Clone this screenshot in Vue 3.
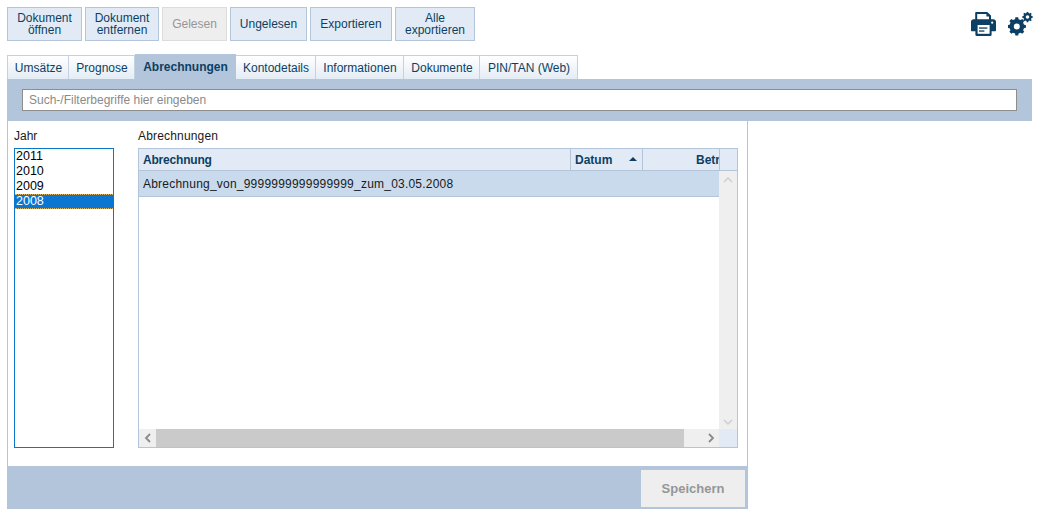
<script setup>
const actions = [
  { label: ['Dokument', 'öffnen'], w: 75 },
  { label: ['Dokument', 'entfernen'], w: 74 },
  { label: ['Gelesen'], w: 65, disabled: true },
  { label: ['Ungelesen'], w: 77 },
  { label: ['Exportieren'], w: 82 },
  { label: ['Alle', 'exportieren'], w: 80 },
]
const tabs = [
  { label: 'Umsätze', w: 62 },
  { label: 'Prognose', w: 66 },
  { label: 'Abrechnungen', w: 101, active: true },
  { label: 'Kontodetails', w: 80 },
  { label: 'Informationen', w: 88 },
  { label: 'Dokumente', w: 76 },
  { label: 'PIN/TAN (Web)', w: 98 },
]
const years = ['2011', '2010', '2009', '2008']

function gear(cx, cy, outer, root, hole, teeth) {
  const pt = (r, a) => `${(cx + r * Math.cos(a)).toFixed(2)} ${(cy + r * Math.sin(a)).toFixed(2)}`
  const step = (Math.PI * 2) / teeth
  let d = ''
  for (let i = 0; i < teeth; i++) {
    const a = i * step - Math.PI / 2
    const w = step * 0.2
    const b = step * 0.3
    d += `${i ? 'L' : 'M'}${pt(root, a - b)}L${pt(outer, a - w)}L${pt(outer, a + w)}L${pt(root, a + b)}`
  }
  d += `Z M${cx - hole} ${cy}a${hole} ${hole} 0 1 0 ${hole * 2} 0a${hole} ${hole} 0 1 0 ${-hole * 2} 0Z`
  return d
}
const bigGear = gear(8.8, 14.4, 9.2, 7.4, 3, 8)
const smallGear = gear(19.5, 5, 5.3, 4.1, 1.8, 8)
</script>

<template>
  <div class="page">
    <header class="toolbar">
      <div class="actions">
        <button
          v-for="a in actions"
          :key="a.label[0] + a.w"
          class="action"
          :class="{ disabled: a.disabled }"
          :style="{ width: a.w + 'px' }"
        >
          <span v-for="l in a.label" :key="l">{{ l }}</span>
        </button>
      </div>
      <div class="tools">
        <svg class="printer" viewBox="0 0 25 24" width="25" height="24">
          <path fill="#0c3f63" fill-rule="evenodd" d="M5 0h11.2L20 3.4V9H4.2V.8C4.2.4 4.6 0 5 0zM6.2 2v6h11.8V4.4h-2.6V2z" />
          <path fill="#0c3f63" d="M2.6 7.2h19.8c1.4 0 2.6 1.2 2.6 2.6v8.4c0 .6-.4 1-1 1h-3.4v3.6c0 .6-.4 1.2-1 1.2H5.4c-.6 0-1-.6-1-1.2v-3.6H1c-.6 0-1-.4-1-1V9.8c0-1.4 1.2-2.6 2.6-2.6z" />
          <rect x="6.6" y="13" width="12" height="8.8" fill="#fff" />
          <rect x="8" y="15.4" width="8.4" height="1.3" fill="#0c3f63" />
          <rect x="8" y="18.4" width="5.4" height="1.3" fill="#0c3f63" />
          <circle cx="21.2" cy="10.7" r="1.1" fill="#fff" />
        </svg>
        <svg class="cogs" viewBox="0 0 25 24" width="25" height="24">
          <path fill="#0c3f63" fill-rule="evenodd" :d="bigGear" />
          <path fill="#0c3f63" fill-rule="evenodd" :d="smallGear" />
        </svg>
      </div>
    </header>

    <nav class="tabs">
      <div
        v-for="t in tabs"
        :key="t.label"
        class="tab"
        :class="{ active: t.active }"
        :style="{ width: t.w + 'px' }"
      >{{ t.label }}</div>
    </nav>

    <div class="filter">
      <div class="filter-input">Such-/Filterbegriffe hier eingeben</div>
    </div>

    <main class="panel">
      <div class="content">
        <section class="year-col">
          <div class="label">Jahr</div>
          <div class="listbox">
            <div
              v-for="y in years"
              :key="y"
              class="year"
              :class="{ selected: y === '2008' }"
            >{{ y }}</div>
          </div>
        </section>
        <section class="table-col">
          <div class="label label-wide">Abrechnungen</div>
          <div class="grid">
            <div class="grid-head">
              <div class="th th-name">Abrechnung</div>
              <div class="th th-date">Datum<span class="sort"></span></div>
              <div class="th th-amount"><span>Betrag</span></div>
              <div class="th th-spare"></div>
            </div>
            <div class="grid-body">
              <div class="rows">
                <div class="row">Abrechnung_von_9999999999999999_zum_03.05.2008</div>
              </div>
              <div class="vscroll">
                <svg width="12" height="8" viewBox="0 0 12 8"><path d="M2 6l4-4 4 4" fill="none" stroke="#cfcfcf" stroke-width="1.5" /></svg>
                <svg width="12" height="8" viewBox="0 0 12 8"><path d="M2 2l4 4 4-4" fill="none" stroke="#cfcfcf" stroke-width="1.5" /></svg>
              </div>
            </div>
            <div class="hscroll-row">
              <div class="hscroll">
                <svg class="arrow" width="17" height="12" viewBox="0 0 17 12"><path d="M11 2L7 6l4 4" fill="none" stroke="#8a8a8a" stroke-width="1.8" /></svg>
                <div class="thumb"></div>
                <svg class="arrow end" width="17" height="12" viewBox="0 0 17 12"><path d="M7 2l4 4-4 4" fill="none" stroke="#8a8a8a" stroke-width="1.8" /></svg>
              </div>
              <div class="corner"></div>
            </div>
          </div>
        </section>
      </div>
      <footer class="footer">
        <button class="save">Speichern</button>
      </footer>
    </main>
  </div>
</template>

<style>
html, body { margin: 0; background: #fff; }
</style>

<style scoped>
.page {
  width: 1040px;
  height: 512px;
  box-sizing: border-box;
  padding: 7px 8px 0 7px;
  overflow: hidden;
  font-family: "Liberation Sans", Arial, sans-serif;
  font-size: 12px;
  color: #0c3f63;
}
.toolbar {
  display: flex;
  justify-content: space-between;
  height: 34px;
}
.actions { display: flex; gap: 3px; }
.action {
  box-sizing: border-box;
  height: 34px;
  padding: 0;
  border: 1px solid #b3c5da;
  background: #e2ebf5;
  color: #0c3f63;
  font: 12px/12px "Liberation Sans", Arial, sans-serif;
  display: flex;
  flex-direction: column;
  align-items: center;
  justify-content: center;
}
.action.disabled {
  background: #eeeeee;
  border-color: #dcdcdc;
  color: #969696;
}
.tools {
  display: flex;
  gap: 12px;
  padding: 5px 0 0;
  margin-right: -1px;
  align-items: flex-start;
}
.tabs {
  display: flex;
  align-items: flex-end;
  height: 25px;
  margin-top: 13px;
}
.tab {
  box-sizing: border-box;
  height: 24px;
  line-height: 24px;
  padding-left: 1px;
  text-align: center;
  border: 1px solid #c3d2e3;
  border-bottom: 0;
  border-left-width: 0;
  background: linear-gradient(#ffffff, #e4ecf5);
}
.tab:first-child { border-left-width: 1px; }
.tab.active {
  height: 25px;
  line-height: 25px;
  background: #b3c5da;
  border-color: #b3c5da;
  font-weight: bold;
}
.filter {
  height: 42px;
  box-sizing: border-box;
  padding: 10px 15px;
  background: #b3c5da;
}
.filter-input {
  box-sizing: border-box;
  height: 22px;
  line-height: 20px;
  padding-left: 6px;
  background: #fff;
  border: 1px solid #8e8e8e;
  color: #8a8a8a;
}
.panel {
  width: 741px;
  display: flex;
  flex-direction: column;
  height: 388px;
}
.content {
  box-sizing: border-box;
  height: 345px;
  border-left: 1px solid #b3c5da;
  border-right: 1px solid #b3c5da;
  padding: 7px 9px 0 6px;
  display: flex;
  gap: 24px;
  color: #000;
}
.label { height: 20px; line-height: 16px; color: #1a1a1a; }
.label-wide { letter-spacing: 0.17px; }
.listbox {
  box-sizing: border-box;
  width: 100px;
  height: 300px;
  border: 1px solid #0a77c9;
  color: #000;
  font-size: 12.5px;
}
.year {
  box-sizing: border-box;
  height: 15px;
  line-height: 15px;
  padding-left: 1px;
}
.year.selected {
  background: #0a76d1;
  color: #fff;
  border-top: 1px dotted #d8b466;
  border-bottom: 1px dotted #d8b466;
  line-height: 13px;
}
.table-col { width: 600px; }
.grid {
  box-sizing: border-box;
  height: 300px;
  border: 1px solid #b3c5da;
  display: flex;
  flex-direction: column;
}
.grid-head {
  display: flex;
  height: 22px;
  flex: none;
  box-sizing: border-box;
  border-bottom: 1px solid #b3c5da;
  background: #e2ebf5;
  color: #0c3f63;
  font-weight: bold;
}
.th {
  box-sizing: border-box;
  line-height: 22px;
  border-right: 1px solid #b3c5da;
  overflow: hidden;
  white-space: nowrap;
  padding: 0 4px;
  position: relative;
}
.th-name { width: 432px; letter-spacing: -0.2px; }
.th-date { width: 72px; }
.th-amount { width: 77px; display: flex; justify-content: flex-start; padding-left: 53px; }
.th-spare { flex: 1; border-right: 0; padding: 0; }
.sort {
  position: absolute;
  right: 5px;
  top: 8px;
  border-left: 4px solid transparent;
  border-right: 4px solid transparent;
  border-bottom: 4px solid #0c3f63;
}
.grid-body {
  flex: 1;
  display: flex;
  min-height: 0;
}
.rows { width: 580px; }
.row {
  box-sizing: border-box;
  height: 26px;
  line-height: 27px;
  padding-left: 4px;
  letter-spacing: 0.22px;
  background: #c9daec;
  border-bottom: 1px solid #b3c5da;
  color: #1a1a1a;
}
.vscroll {
  flex: 1;
  background: #efefef;
  display: flex;
  flex-direction: column;
  justify-content: space-between;
  align-items: center;
  padding: 5px 0 3px;
}
.hscroll-row {
  display: flex;
  height: 18px;
  flex: none;
}
.hscroll {
  width: 580px;
  background: #efefef;
  display: flex;
  align-items: center;
}
.arrow { flex: none; }
.arrow.end { margin-left: 18px; }
.thumb {
  flex: 1;
  height: 100%;
  background: #cacaca;
}
.corner { flex: 1; background: #e2ebf5; }
.footer {
  box-sizing: border-box;
  height: 43px;
  background: #b3c5da;
  display: flex;
  justify-content: flex-end;
  padding: 4px 3px 2px 0;
}
.save {
  box-sizing: border-box;
  width: 104px;
  height: 37px;
  padding: 0;
  border: 0;
  background: #eeeeee;
  color: #969696;
  font: bold 13px "Liberation Sans", Arial, sans-serif;
}
</style>
